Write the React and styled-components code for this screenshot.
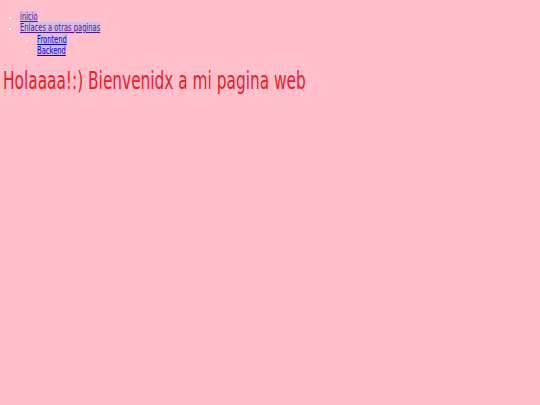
import React from 'react';
import styled, { createGlobalStyle } from 'styled-components';

const GlobalStyle = createGlobalStyle`
  html, body {
    margin: 0;
    background-color: pink;
  }
  body {
    padding: 3px;
    font-family: "DejaVu Sans", sans-serif;
  }
`;

const Menu = styled.ul`
  margin: 8px 0 0;
  padding-left: 17px;
  font-size: 10px;
  line-height: 11.3px;
  color: white;
  list-style-type: square;
`;

const SubMenu = styled.ul`
  margin: 0;
  padding-left: 17px;
  list-style-type: square;
  color: #f8dce6;
`;

const Item = styled.li`
  &::marker {
    font-size: 6px;
  }
`;

const Link = styled.a`
  display: inline-block;
  transform: scaleX(0.675);
  transform-origin: left center;
  color: ${(p) => (p.$visited ? '#551a8b' : '#0000ee')};
  background-color: #d2bcec;
  text-decoration: underline;
  white-space: nowrap;
`;

const Title = styled.h1`
  margin: 11px 0 0;
  font-size: 24px;
  font-weight: normal;
  color: #e8202a;
  white-space: nowrap;
  transform: scaleX(0.64);
  transform-origin: left center;
`;

const App = () => (
  <>
    <GlobalStyle />
    <nav>
      <Menu>
        <Item>
          <Link href="#" $visited>inicio</Link>
        </Item>
        <Item>
          <Link href="#" $visited>Enlaces a otras paginas</Link>
          <SubMenu>
            <Item>
              <Link href="#">Frontend</Link>
            </Item>
            <Item>
              <Link href="#">Backend</Link>
            </Item>
          </SubMenu>
        </Item>
      </Menu>
    </nav>
    <Title>Holaaaa!:) Bienvenidx a mi pagina web</Title>
  </>
);

export default App;
